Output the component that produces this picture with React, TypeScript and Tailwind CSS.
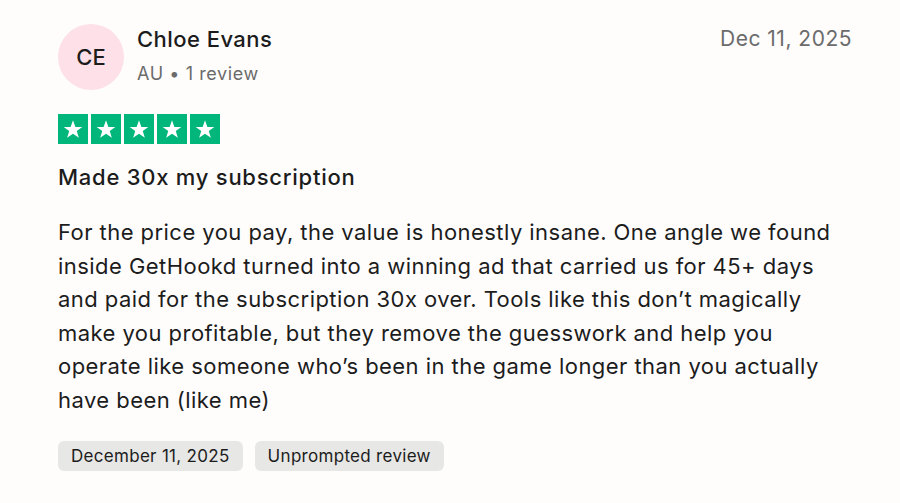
import React from "react";

function Star() {
  return (
    <div className="w-[30px] h-[30px] bg-[#00b67a] flex items-center justify-center">
      <svg width="22" height="22" viewBox="0 0 24 24">
        <path d="M12 2.5l2.6 7.2h7.6l-6.1 4.5 2.3 7.3L12 17.1l-6.4 4.4 2.3-7.3L1.8 9.7h7.6z" fill="#fff" />
      </svg>
    </div>
  );
}

const lines = [
  "For the price you pay, the value is honestly insane. One angle we found",
  "inside GetHookd turned into a winning ad that carried us for 45+ days",
  "and paid for the subscription 30x over. Tools like this don’t magically",
  "make you profitable, but they remove the guesswork and help you",
  "operate like someone who’s been in the game longer than you actually",
  "have been (like me)",
];

export default function App() {
  return (
    <div className="w-[900px] h-[503px] bg-[#fefdfc] text-[#1c1c1c] pl-[58px] pr-[48px] pt-[24px]" style={{ fontFamily: "Inter, 'Noto Sans', sans-serif" }}>
      <div className="flex items-start">
        <div className="w-[66px] h-[66px] rounded-full bg-[#fde0e8] flex items-center justify-center text-[22px] font-medium text-[#1c1c1c]">CE</div>
        <div className="ml-[13px] flex-1">
          <div className="text-[22px] font-medium leading-[30px] tracking-[0.45px]">Chloe Evans</div>
          <div className="text-[18px] text-[#6b6b6b] leading-[26px] mt-[7px] tracking-[0.6px]">AU • 1 review</div>
        </div>
        <div className="text-[21px] text-[#6b6b6b] leading-[30px] tracking-[0.5px]">Dec 11, 2025</div>
      </div>
      <div className="flex gap-[3px] mt-[24px]">
        <Star /><Star /><Star /><Star /><Star />
      </div>
      <div className="mt-[18px] text-[22px] font-medium leading-[30px] tracking-[0.75px]">Made 30x my subscription</div>
      <p className="mt-[24px] text-[22px] leading-[33.6px] text-[#1c1c1c] tracking-[0.45px] whitespace-nowrap">
        {lines.map((l, i) => (
          <span key={i} className="block">{l}</span>
        ))}
      </p>
      <div className="flex gap-[12px] mt-[23px]">
        <span className="h-[30px] px-[13px] rounded-[6px] bg-[#e7e7e5] text-[17px] leading-[30px] tracking-[0.3px]">December 11, 2025</span>
        <span className="h-[30px] px-[13px] rounded-[6px] bg-[#e7e7e5] text-[17px] leading-[30px] tracking-[0.3px]">Unprompted review</span>
      </div>
    </div>
  );
}
